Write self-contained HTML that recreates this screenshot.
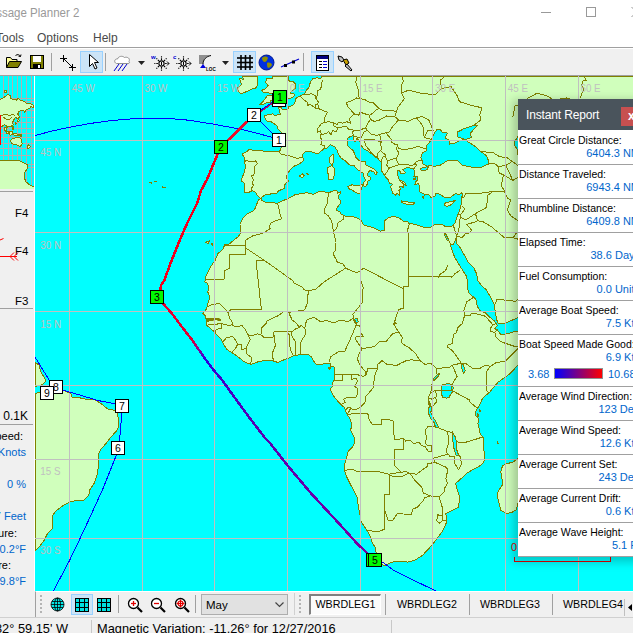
<!DOCTYPE html>
<html><head><meta charset="utf-8"><title>Passage Planner 2</title>
<style>
html,body{margin:0;padding:0;}
body{width:633px;height:633px;overflow:hidden;position:relative;background:#fff;font-family:"Liberation Sans",Arial,sans-serif;font-size:11px;color:#000;}
.abs{position:absolute;}
#title{left:-22px;top:5px;font-size:12px;color:#999;white-space:nowrap;line-height:16px;transform:scaleX(0.96);transform-origin:100% 0;}
#menu span{position:absolute;top:30px;font-size:12px;line-height:16px;color:#4a4a4a;white-space:nowrap;}
#tb{left:0;top:47px;width:633px;height:29px;background:#f0f0f0;border-top:1px solid #a0a0a0;box-sizing:border-box;border-bottom:1px solid #a0a0a0;}
#tb:before{content:"";position:absolute;left:0;top:0;width:100%;height:1px;background:#fff;}
.sel{position:absolute;background:#cce4f7;border:1px solid #99d1ff;box-sizing:border-box;}
.sep{position:absolute;width:1px;background:#a0a0a0;}
#left{left:0;top:76px;width:34px;height:515px;background:#f0f0f0;overflow:hidden;}
#left .t{position:absolute;white-space:nowrap;font-size:11px;line-height:13px;}
#left .b{color:#0066cc;}
.hl{position:absolute;left:0;width:33px;height:1px;background:#a0a0a0;}
#bot{left:0;top:591px;width:633px;height:26px;background:#f0f0f0;}
#status{left:0;top:617px;width:633px;height:16px;background:#f0f0f0;border-top:1px solid #d0d0d0;box-sizing:border-box;font-size:12.8px;white-space:nowrap;}
#ir{left:518px;top:99px;width:130px;height:458px;background:#fff;box-shadow:-3px 3px 9px 2px rgba(0,0,0,0.22);}
#irh{position:absolute;left:0;top:0;width:100%;height:31px;background:#4a545c;color:#fff;font-size:12px;letter-spacing:-0.15px;}
.row{position:absolute;left:0;width:130px;border-bottom:1px solid #a0a0a0;box-sizing:border-box;}
.row .l{position:absolute;left:1px;top:4px;white-space:nowrap;line-height:13px;transform:scaleX(0.955);transform-origin:0 0;}
.row .v{position:absolute;right:8px;top:17px;white-space:nowrap;color:#0066cc;line-height:13px;}
</style></head><body>
<div id="title" class="abs">Passage Planner 2</div>
<svg class="abs" style="left:530px;top:0" width="103" height="26"><g stroke="#999" stroke-width="1" fill="none"><line x1="11" y1="12.5" x2="21" y2="12.5"/><rect x="56.5" y="7.5" width="9" height="9"/><line x1="101.5" y1="7" x2="104" y2="9.5"/><line x1="101.5" y1="17" x2="104" y2="14.5"/></g></svg>
<div id="menu"><span style="left:-4px">Tools</span><span style="left:37px">Options</span><span style="left:93px">Help</span></div>
<div id="tb" class="abs">
<div class="sel" style="left:80px;top:3px;width:23px;height:22px"></div>
<div class="sel" style="left:233px;top:3px;width:23px;height:22px"></div>
<div class="sel" style="left:311px;top:3px;width:23px;height:22px"></div>
<div class="sep" style="left:51px;top:5px;height:18px"></div>
<div class="sep" style="left:105px;top:5px;height:18px"></div>
<div class="sep" style="left:303px;top:5px;height:18px"></div>
<svg class="abs" style="left:5px;top:6px" width="18" height="16" viewBox="0 0 18 16"><path d="M1.5 13.5V3.5h4l1.5 2h5v2" fill="#ffff99" stroke="#000"/><path d="M1.5 13.5l3-6h12l-3.5 6z" fill="#808000" stroke="#000"/><path d="M10.5 1.5c2-1.5 4-1 5 1m0 0l.5-2m-.5 2l-2-.3" fill="none" stroke="#000"/></svg>
<svg class="abs" style="left:29px;top:6px" width="16" height="16" viewBox="0 0 16 16"><rect x="1.5" y="1.5" width="13" height="13" fill="#808000" stroke="#000"/><rect x="4" y="2" width="8" height="6" fill="#fff"/><rect x="4" y="10" width="8" height="4.5" fill="#000"/><rect x="9" y="11" width="2" height="3" fill="#fff"/></svg>
<svg class="abs" style="left:59px;top:6px" width="18" height="18" viewBox="0 0 18 18"><g stroke="#000" fill="none"><line x1="4.5" y1="1" x2="4.5" y2="8"/><line x1="1" y1="4.5" x2="8" y2="4.5"/><line x1="4.5" y1="4.5" x2="13" y2="13" /><line x1="13.5" y1="10" x2="13.5" y2="17"/><line x1="10" y1="13.5" x2="17" y2="13.5"/></g></svg>
<svg class="abs" style="left:87px;top:5px" width="14" height="18" viewBox="0 0 14 18"><path d="M2.5 1.5v12l3-3 2.5 5.5 2-1-2.5-5.5h4z" fill="#fff" stroke="#000"/></svg>
<svg class="abs" style="left:113px;top:6px" width="20" height="18" viewBox="0 0 20 18"><path d="M3.5 9.5c-3-1-2-5 1-4.5c1-3 5-3.5 7-1.5c3-1 6 1 4.5 4c1 1 .5 2-1 2z" fill="#fff" stroke="#909090"/><g stroke="#0000d0"><line x1="6" y1="10" x2="1" y2="17"/><line x1="10" y1="10" x2="5" y2="17"/><line x1="14" y1="10" x2="9" y2="17"/></g></svg>
<svg class="abs" style="left:138px;top:12px" width="8" height="6" viewBox="0 0 8 6"><path d="M0 1h7l-3.5 4z" fill="#222"/></svg>
<svg class="abs" style="left:151px;top:5px" width="20" height="19" viewBox="0 0 20 19"><text x="0" y="6" font-size="6px" font-weight="bold" fill="#0000d0" font-family="Liberation Sans, sans-serif">w</text><g stroke="#000" fill="none" stroke-width="1.1"><circle cx="10.5" cy="10.5" r="2.6" fill="#fff"/><line x1="10.5" y1="9" x2="10.5" y2="12"/><g stroke-dasharray="1.6 0.9"><line x1="14.1" y1="10.5" x2="17.7" y2="10.5"/><line x1="13.0" y1="13.0" x2="15.6" y2="15.6"/><line x1="10.5" y1="14.1" x2="10.5" y2="17.7"/><line x1="8.0" y1="13.0" x2="5.4" y2="15.6"/><line x1="6.9" y1="10.5" x2="3.3" y2="10.5"/><line x1="8.0" y1="8.0" x2="5.4" y2="5.4"/><line x1="10.5" y1="6.9" x2="10.5" y2="3.3"/><line x1="13.0" y1="8.0" x2="15.6" y2="5.4"/></g><path d="M16 8.5l2 2-2 2" stroke-width="1"/></g></svg>
<svg class="abs" style="left:173px;top:5px" width="20" height="19" viewBox="0 0 20 19"><text x="0" y="6" font-size="6px" font-weight="bold" fill="#0000d0" font-family="Liberation Sans, sans-serif">c</text><g stroke="#000" fill="none" stroke-width="1.1"><circle cx="10.5" cy="10.5" r="2.6" fill="#fff"/><line x1="10.5" y1="9" x2="10.5" y2="12"/><g stroke-dasharray="1.6 0.9"><line x1="14.1" y1="10.5" x2="17.7" y2="10.5"/><line x1="13.0" y1="13.0" x2="15.6" y2="15.6"/><line x1="10.5" y1="14.1" x2="10.5" y2="17.7"/><line x1="8.0" y1="13.0" x2="5.4" y2="15.6"/><line x1="6.9" y1="10.5" x2="3.3" y2="10.5"/><line x1="8.0" y1="8.0" x2="5.4" y2="5.4"/><line x1="10.5" y1="6.9" x2="10.5" y2="3.3"/><line x1="13.0" y1="8.0" x2="15.6" y2="5.4"/></g><path d="M16 8.5l2 2-2 2" stroke-width="1"/></g></svg>
<svg class="abs" style="left:198px;top:6px" width="22" height="18" viewBox="0 0 22 18"><path d="M1 1h12c-5 1-8 4-8 9h-4z" fill="#909090"/><path d="M13 1.5c-5 1-8 4-8 9" fill="none" stroke="#000"/><path d="M2 14l3-4 3 4z" fill="#0000e0"/><text x="8" y="17" font-size="4.6px" font-weight="bold" font-family="Liberation Sans, sans-serif">LOC</text></svg>
<svg class="abs" style="left:222px;top:12px" width="8" height="6" viewBox="0 0 8 6"><path d="M0 1h7l-3.5 4z" fill="#222"/></svg>
<svg class="abs" style="left:237px;top:7px" width="16" height="16" viewBox="0 0 16 16"><g stroke="#000" stroke-width="1.600"><line x1="4" y1="0" x2="4" y2="15"/><line x1="8.5" y1="0" x2="8.5" y2="15"/><line x1="13" y1="0" x2="13" y2="15"/><line x1="0" y1="3" x2="16" y2="3"/><line x1="0" y1="7.5" x2="16" y2="7.5"/><line x1="0" y1="12" x2="16" y2="12"/></g></svg>
<svg class="abs" style="left:258px;top:6px" width="17" height="17" viewBox="0 0 17 17"><circle cx="8.5" cy="8.5" r="7.5" fill="#0030e0" stroke="#001890"/><path d="M4 4c2-2 5-2 6 0c-1 2-1 3-3 4c-2 0-3-2-3-4zM9 9c2-1 5 0 5 2c-1 2-3 3-4 3c-1-1-1-3-1-5z" fill="#909000"/></svg>
<svg class="abs" style="left:280px;top:8px" width="20" height="14" viewBox="0 0 20 14"><line x1="1" y1="11" x2="19" y2="3" stroke="#0000d0" stroke-width="1.200"/><rect x="4" y="8" width="3" height="3" fill="#000"/><rect x="12" y="4.5" width="3" height="3" fill="#000"/></svg>
<svg class="abs" style="left:316px;top:7px" width="14" height="17" viewBox="0 0 14 17"><rect x=".5" y=".5" width="12" height="15" fill="#fff" stroke="#000"/><rect x="1" y="1" width="11" height="3" fill="#000080"/><g stroke="#000"><line x1="3" y1="6.5" x2="6" y2="6.5"/><line x1="3" y1="9.5" x2="6" y2="9.5"/><line x1="3" y1="12.5" x2="6" y2="12.5"/></g><g stroke="#0000d0"><line x1="7" y1="6.5" x2="11" y2="6.5"/><line x1="7" y1="9.5" x2="11" y2="9.5"/><line x1="7" y1="12.5" x2="11" y2="12.5"/></g></svg>
<svg class="abs" style="left:336px;top:6px" width="18" height="18" viewBox="0 0 18 18"><g stroke="#000" stroke-width="1"><path d="M2 2l4 1 2 3-2 2-3-2z" fill="#c0c0c0"/><path d="M7 6l4-1 2 4-3 2z" fill="#c8a000"/><path d="M11 10l5 6-1 1-6-5z" fill="#c0c0c0"/></g></svg>
</div>
<svg id="map" width="598" height="515" viewBox="35 76 598 515" style="position:absolute;left:35px;top:76px;background:#00ffff" shape-rendering="crispEdges">
<g fill="#d0ffbc" stroke="#808000" stroke-width="1" stroke-linejoin="round">
<path d="M320.9 78.5 L316.6 77.7 L312.7 78.9 L310.5 81.8 L308.8 87.7 L306.9 89.7 L304.5 94.0 L299.6 96.3 L296.5 97.5 L295.3 100.2 L294.8 103.2 L292.3 105.5 L288.5 107.0 L288.0 108.9 L285.6 110.0 L282.2 109.6 L281.2 107.0 L278.3 107.0 L279.7 110.7 L280.2 114.8 L277.8 114.8 L274.4 115.5 L273.0 113.7 L270.1 114.4 L264.7 115.5 L265.2 119.2 L266.7 121.0 L271.0 121.7 L275.4 124.6 L277.3 126.0 L277.8 128.8 L281.7 133.0 L282.2 137.2 L281.7 143.4 L280.7 149.5 L278.8 151.8 L273.0 151.5 L269.1 151.1 L263.3 151.1 L259.4 150.1 L253.6 150.5 L249.2 149.1 L246.8 151.8 L242.9 153.5 L242.4 154.8 L244.4 157.4 L244.6 161.4 L245.4 167.2 L244.4 172.3 L242.0 178.0 L241.5 181.4 L242.9 182.0 L244.9 183.6 L244.9 186.7 L244.1 192.2 L249.2 192.2 L251.7 190.9 L254.1 191.2 L256.5 193.4 L257.5 195.8 L260.4 198.2 L261.8 197.3 L266.2 194.0 L270.5 194.0 L276.8 193.7 L278.3 190.9 L284.1 188.5 L284.1 186.0 L287.0 181.7 L288.5 181.4 L286.0 177.3 L287.5 173.6 L290.9 169.1 L293.3 166.5 L298.2 164.6 L303.0 161.4 L303.0 158.4 L302.3 154.8 L304.5 152.1 L307.8 151.1 L311.7 151.8 L313.7 152.5 L317.5 153.8 L320.0 152.1 L322.9 149.5 L327.2 147.8 L330.6 144.7 L335.0 147.1 L337.4 150.8 L338.4 154.5 L341.3 158.1 L344.7 160.4 L347.1 162.7 L350.5 165.6 L354.4 165.9 L356.3 168.5 L357.7 169.7 L360.2 171.3 L363.1 173.2 L364.0 176.7 L365.5 180.5 L364.0 182.3 L363.3 185.7 L365.5 186.4 L367.7 183.6 L367.9 181.1 L370.6 179.8 L370.3 177.3 L367.4 175.5 L367.9 172.9 L369.9 170.4 L374.2 172.0 L375.2 174.5 L376.6 174.8 L377.1 172.6 L374.7 169.4 L369.9 166.9 L365.0 164.3 L365.5 161.4 L361.1 161.4 L358.7 160.1 L355.8 157.1 L353.4 150.8 L350.0 148.1 L347.1 145.4 L347.1 140.7 L348.1 137.9 L351.0 136.2 L353.9 135.8 L353.4 140.0 L354.8 142.0 L356.8 138.6 L359.7 140.7 L361.1 145.4 L364.5 149.5 L367.4 150.8 L371.3 153.5 L375.2 156.8 L377.6 158.1 L380.5 161.4 L382.0 163.3 L381.5 167.2 L381.5 171.0 L383.9 174.2 L385.4 176.7 L388.3 179.8 L389.7 183.6 L392.6 184.2 L390.7 186.7 L392.1 190.9 L392.6 193.4 L396.0 195.2 L397.0 193.4 L399.4 195.2 L398.9 190.3 L400.9 189.1 L399.4 186.7 L402.3 186.7 L404.0 188.2 L403.8 184.8 L400.4 181.1 L398.4 178.0 L397.5 174.2 L397.0 171.0 L398.4 170.1 L400.4 172.0 L400.9 173.9 L403.3 173.6 L405.7 172.6 L402.8 169.7 L405.2 168.1 L408.6 167.8 L413.5 168.5 L414.4 171.7 L414.4 173.2 L413.9 176.7 L417.8 176.7 L417.3 180.5 L415.4 182.0 L414.9 184.5 L418.8 183.6 L419.3 186.7 L419.3 189.7 L420.2 192.2 L423.6 194.0 L426.0 194.0 L428.5 194.6 L430.9 197.3 L434.8 196.7 L436.2 193.1 L440.6 194.6 L444.9 197.6 L450.3 197.3 L455.1 193.7 L459.5 194.6 L461.9 192.8 L462.9 194.6 L461.2 198.2 L461.4 203.0 L460.7 206.5 L459.5 210.6 L457.5 215.3 L456.6 218.7 L455.1 222.7 L453.2 225.6 L450.3 226.7 L445.9 227.0 L444.0 225.6 L441.6 224.4 L437.7 224.2 L434.3 225.0 L431.9 226.7 L428.0 228.1 L423.1 227.0 L418.3 225.3 L412.5 223.9 L409.1 223.6 L407.6 221.6 L403.3 221.3 L399.4 218.1 L394.1 216.4 L389.2 217.3 L384.9 220.4 L384.1 227.3 L384.4 230.1 L380.5 231.2 L375.7 228.7 L369.9 226.7 L363.6 225.0 L361.1 219.9 L356.3 217.6 L351.4 216.4 L347.1 217.0 L343.2 215.0 L341.3 214.7 L340.3 212.1 L336.4 210.0 L336.7 208.3 L340.3 203.5 L340.8 200.6 L338.9 199.1 L338.4 195.8 L341.0 193.1 L340.8 191.9 L337.4 193.4 L336.9 190.9 L335.0 190.3 L329.2 192.5 L323.8 191.9 L318.5 191.9 L313.2 194.3 L306.9 192.8 L302.0 193.4 L294.8 194.9 L288.0 198.8 L282.7 200.6 L277.3 203.5 L273.0 202.4 L266.7 203.0 L261.8 200.6 L261.3 198.8 L258.7 199.4 L256.5 204.7 L254.6 209.7 L250.7 212.4 L246.3 214.4 L242.4 218.7 L240.0 224.4 L240.5 229.5 L240.8 232.9 L238.1 236.8 L233.7 240.1 L229.4 244.0 L225.0 244.5 L222.6 249.5 L217.7 253.8 L215.3 260.2 L211.0 266.1 L208.5 270.9 L205.6 277.2 L204.9 281.8 L207.6 283.4 L209.0 289.1 L207.6 291.6 L210.0 296.8 L207.6 304.4 L206.6 308.9 L202.7 313.4 L205.6 315.9 L206.1 319.9 L206.1 324.9 L210.0 327.9 L214.8 332.3 L216.8 334.8 L221.1 339.2 L223.6 344.1 L226.9 349.5 L231.8 352.5 L235.2 354.9 L241.5 359.3 L243.9 361.7 L250.7 364.4 L258.4 361.7 L265.7 360.3 L272.0 360.7 L277.8 362.4 L282.7 360.3 L289.9 357.6 L293.3 355.9 L299.6 354.6 L304.0 354.4 L308.8 354.9 L311.7 357.3 L313.7 361.2 L316.6 364.6 L321.4 364.1 L327.7 363.7 L330.1 363.4 L330.6 366.1 L334.0 366.6 L334.5 370.9 L335.0 374.3 L334.0 380.2 L332.6 383.1 L332.6 386.5 L330.1 388.9 L332.6 394.7 L335.9 399.1 L340.8 404.4 L344.7 407.8 L346.6 413.7 L347.6 415.1 L350.5 419.5 L351.9 426.4 L350.5 429.8 L354.4 438.2 L354.4 443.1 L352.4 447.1 L348.1 451.6 L346.6 458.1 L344.7 464.1 L344.4 470.4 L346.6 476.8 L351.9 487.1 L357.3 497.5 L357.7 502.8 L359.7 513.4 L361.1 521.5 L366.9 530.3 L369.9 535.3 L372.3 542.6 L375.7 548.3 L376.2 553.4 L374.2 555.2 L376.9 560.4 L377.1 563.0 L381.0 563.9 L384.4 565.7 L389.2 563.3 L394.1 561.6 L401.3 561.0 L407.6 562.1 L411.5 561.3 L415.9 559.5 L422.7 555.2 L428.0 549.4 L432.8 544.3 L437.7 537.5 L442.5 531.4 L446.9 521.5 L446.4 516.1 L445.4 514.0 L449.8 511.8 L458.5 507.0 L459.5 500.1 L459.0 495.4 L457.1 489.2 L455.6 483.5 L460.9 478.8 L466.3 473.7 L471.6 470.2 L478.9 466.6 L483.7 462.6 L484.7 456.6 L483.7 448.6 L483.7 438.2 L480.3 434.2 L479.3 428.8 L477.9 423.4 L478.9 419.0 L475.9 416.1 L475.5 412.2 L477.4 408.3 L479.8 404.9 L482.2 399.1 L486.1 394.7 L489.0 393.3 L493.4 387.4 L498.2 382.1 L504.5 377.7 L510.3 373.4 L516.6 366.6 L520.0 363.7 L524.9 356.4 L528.8 347.6 L533.6 339.7 L534.6 334.8 L536.0 327.9 L532.1 328.4 L524.9 330.6 L515.2 331.3 L505.5 334.3 L500.7 334.5 L497.3 329.9 L494.8 328.9 L497.3 325.4 L494.4 320.9 L489.5 316.9 L485.2 312.9 L479.8 310.4 L477.4 306.4 L475.9 299.3 L468.7 292.7 L467.7 288.6 L467.7 281.3 L466.3 276.1 L460.0 266.1 L454.6 257.0 L451.7 249.5 L450.0 244.0 L453.2 245.1 L454.6 241.8 L456.8 235.7 L456.1 243.4 L459.5 246.7 L464.3 254.9 L468.2 262.4 L474.0 268.2 L476.9 274.5 L477.4 279.8 L481.3 285.5 L486.1 289.6 L491.0 297.8 L494.4 304.9 L495.3 311.9 L496.8 319.9 L498.2 323.7 L503.1 323.2 L505.5 322.9 L512.8 319.9 L520.0 316.9 L527.3 312.9 L539.4 308.4 L578.2 301.8 L638.0 289.2 L638.0 76.5 L322.0 76.5 L320.9 78.5Z"/>
<path d="M40.4 385.5 L43.3 384.0 L45.8 380.7 L43.8 376.8 L40.4 370.9 L39.0 365.1 L36.6 363.2 L35.5 362.4 L35.5 386.3 L40.4 385.5Z"/>
<path d="M39.5 546.6 L43.8 540.9 L47.2 534.2 L52.1 528.7 L52.1 516.1 L55.5 511.3 L63.2 505.4 L71.0 501.7 L76.8 500.4 L84.0 500.1 L88.9 494.9 L89.8 489.7 L94.7 482.4 L97.6 473.2 L98.6 464.1 L98.6 454.1 L101.0 449.1 L106.3 443.1 L111.2 436.7 L117.9 429.3 L118.7 420.0 L116.5 410.7 L107.3 408.8 L101.0 403.5 L93.7 399.3 L85.0 399.1 L76.8 397.1 L72.4 397.6 L71.0 394.2 L64.7 390.8 L57.4 388.4 L53.5 389.9 L51.6 386.5 L47.7 386.5 L43.8 389.9 L40.4 392.8 L35.5 393.1 L35.5 550.3 L39.5 546.6Z"/>
<path d="M243.9 79.7 L239.5 78.1 L241.5 84.6 L237.1 88.5 L239.1 92.5 L241.5 93.6 L246.3 91.7 L251.2 89.3 L256.5 87.7 L257.9 82.2 L257.9 76.5 L242.0 76.5 L243.9 79.7Z"/>
<path d="M262.8 104.7 L267.2 102.1 L270.1 102.8 L271.0 100.2 L275.4 100.2 L278.3 100.2 L281.7 98.6 L288.5 99.0 L292.3 97.5 L294.3 96.0 L294.3 94.0 L290.4 93.2 L291.9 90.9 L295.3 88.5 L296.0 84.6 L293.3 81.8 L289.4 81.8 L288.5 78.9 L288.6 76.5 L272.7 76.5 L272.5 78.9 L266.7 78.1 L265.7 82.6 L268.1 85.4 L265.2 88.9 L261.8 90.1 L263.3 92.1 L268.1 92.5 L272.0 94.0 L274.4 92.8 L272.5 95.6 L267.2 95.6 L265.2 98.6 L262.8 101.7 L259.9 104.4 L262.8 104.7Z"/>
<path d="M348.5 188.5 L352.9 190.6 L357.3 193.4 L360.7 194.0 L361.1 189.1 L363.1 184.5 L357.7 185.7 L351.9 184.8 L347.8 186.7 L348.5 188.5Z"/>
<path d="M327.2 170.4 L328.2 174.2 L328.2 179.8 L331.1 179.8 L333.5 178.6 L334.5 174.2 L334.5 168.5 L332.1 165.6 L327.2 167.8 L327.2 170.4Z"/>
<path d="M329.6 162.7 L332.1 164.6 L333.0 163.3 L333.5 158.1 L333.0 154.1 L329.2 158.1 L329.6 162.7Z"/>
<path d="M401.8 202.7 L407.6 204.4 L413.5 204.1 L414.9 202.7 L409.6 202.1 L404.7 201.8 L401.6 200.9 L401.8 202.7Z"/>
<path d="M444.5 205.6 L447.4 206.5 L452.2 204.1 L455.1 200.3 L451.7 201.8 L447.4 202.1 L444.0 203.8 L444.5 205.6Z"/>
<path d="M300.6 176.7 L302.3 178.0 L304.2 175.5 L302.5 173.9 L299.1 176.4 L300.6 176.7Z"/>
<path d="M307.4 174.5 L308.3 174.2 L306.2 173.2 L307.4 174.5Z"/>
<path d="M400.9 181.7 L403.8 183.9 L406.4 186.0 L404.3 182.0 L399.9 180.2 L400.9 181.7Z"/>
<path d="M423.6 198.2 L424.1 195.8 L422.2 197.0 L423.6 198.2Z"/>
<path d="M413.5 179.8 L415.9 179.8 L415.9 177.7 L413.0 178.6 L413.5 179.8Z"/>
<path d="M520.0 451.6 L519.5 457.6 L512.8 462.1 L505.5 464.1 L502.6 465.6 L500.7 471.7 L502.1 479.4 L502.6 484.5 L498.2 491.2 L497.3 496.5 L499.2 503.3 L500.7 510.2 L506.5 513.7 L513.2 511.8 L516.2 509.7 L519.5 497.5 L524.4 479.4 L527.3 470.2 L529.2 461.6 L531.7 459.1 L529.7 451.6 L526.3 444.1 L520.0 451.6Z"/>
<path d="M208.1 244.0 L209.5 241.0 L205.6 242.1 L208.1 244.0Z"/>
<path d="M212.4 245.4 L212.9 243.4 L211.0 243.4 L212.4 245.4Z"/>
<path d="M164.0 187.9 L165.4 187.3 L162.5 187.0 L164.0 187.9Z"/>
<path d="M151.9 183.3 L151.4 182.0 L149.4 182.6 L151.9 183.3Z"/>
<path d="M155.7 182.0 L156.5 181.7 L154.8 181.4 L155.7 182.0Z"/>
<path d="M329.4 369.7 L330.6 368.0 L328.7 367.5 L329.4 369.7Z"/>
<path d="M477.9 416.6 L478.9 415.1 L477.4 413.7 L477.9 416.6Z"/>
<path d="M479.8 411.7 L480.5 410.7 L479.8 409.3 L479.8 411.7Z"/>
<path d="M497.3 443.6 L498.2 443.6 L497.0 441.1 L497.3 443.6Z"/>
<path d="M547.6 325.2 L551.5 324.2 L546.2 323.7 L547.6 325.2Z"/>
</g>
<g fill="#00ffff" stroke="#808000" stroke-width="1" stroke-linejoin="round">
<polygon points="428.0,166.5 423.1,164.0 420.7,157.4 422.7,152.8 426.0,150.8 426.0,146.1 430.9,140.7 433.8,134.4 436.7,129.5 440.1,129.5 442.5,132.3 447.4,133.0 444.9,137.9 449.8,140.7 449.3,144.1 454.6,143.4 459.0,140.7 464.3,139.3 457.1,136.5 457.1,132.3 464.3,128.5 471.6,126.0 477.9,125.3 473.0,130.2 470.1,133.7 471.6,137.2 466.7,139.3 465.3,140.0 469.2,142.7 474.0,145.4 479.8,150.8 486.1,155.5 489.0,161.4 488.5,164.0 481.3,167.2 474.0,167.5 466.7,166.2 461.9,164.9 458.0,160.7 452.2,161.0 447.4,160.7 440.1,165.3 434.3,166.2 429.0,165.6"/>
<polygon points="444.2,233.3 445.6,233.6 448.9,240.2 447.6,241 444.9,236"/>
<polygon points="420,169.5 423,167.2 428.4,166.8 427,169.5 423,171"/>
<polygon points="518.1,136.5 515.2,140.7 514.0,143.4 515.2,146.1 517.1,149.5 517.6,154.1 521.5,160.7 524.9,165.3 527.3,169.7 531.2,171.7 527.3,173.6 526.3,178.0 524.4,183.6 524.9,188.5 530.7,190.3 537.0,193.4 548.1,192.8 549.1,179.8 544.3,167.2 541.8,160.7 534.6,144.1 544.3,130.2 534.6,126.7 524.9,130.2"/>
<polygon points="441.1,389.9 442.5,384.5 448.8,383.6 452.7,385.0 453.2,387.9 452.2,392.3 449.8,395.7 449.8,397.6 446.4,398.1 442.5,397.1 441.6,394.2"/>
<polygon points="429.4,401.8 431.4,407.3 430.9,412.7 432.8,417.1 436.2,422.0 438.6,427.8 435.7,427.4 433.8,422.0 430.4,418.1 428.5,413.2 429.0,407.3"/>
<polygon points="452.2,431.8 455.1,436.7 456.6,442.1 456.6,449.1 458.5,455.6 456.1,455.1 454.1,449.1 453.2,443.1 452.2,438.2"/>
<polygon points="461.4,363.2 463.4,364.6 465.3,370.9 463.4,373.4 461.9,368.5"/>
<polygon points="434.3,380.4 439.9,374.3 438.6,373.4 432.8,379.2"/>
<polygon points="353.4,319.4 357.3,318.4 358.2,321.9 355.3,323.4"/>
</g>
<g fill="none" stroke="#808000" stroke-width="1" stroke-linejoin="round">
<polyline points="276.8,203.5 278.8,206.5 279.3,212.4 281.7,218.7 275.4,221.0 271.0,222.7 269.6,226.1 270.1,229.0 263.3,232.9 258.4,234.6 253.1,235.7 245.5,240.1 245.5,247.8"/>
<polyline points="223.6,245.8 245.5,245.8"/>
<polyline points="245.5,247.8 245.5,254.9 229.4,254.9 229.4,268.5 224.5,270.9 224.0,279.6 205.1,279.6"/>
<polyline points="245.5,247.8 264.1,260.2 293.1,280.8 293.3,282.6 303.0,287.5 303.2,289.6 308.1,290.9"/>
<polyline points="264.1,260.2 256.0,260.2 260.9,305.9 261.6,309.4 242.0,309.7 235.7,309.9 230.3,309.9 228.4,312.9"/>
<polyline points="228.4,312.9 225.0,308.9 219.7,303.9 212.4,304.1 208.5,306.4 207.6,306.4"/>
<polyline points="228.4,312.9 229.4,317.9 232.3,322.2 232.3,324.9"/>
<polyline points="206.1,318.9 212.4,318.9 214.3,317.9 220.6,319.4 220.6,320.4 214.8,319.4 212.9,320.2 206.6,321.4"/>
<polyline points="206.6,325.2 211.4,324.7 221.1,323.6 224.5,324.4 227.9,325.2 232.3,324.9"/>
<polyline points="221.1,323.6 221.1,328.4 216.3,329.4 214.8,332.1"/>
<polyline points="232.3,324.9 235.7,326.9 242.0,325.6 244.9,328.9 246.3,331.8 248.7,335.8"/>
<polyline points="223.1,341.4 226.9,337.3 232.8,336.8 235.7,340.2 237.6,344.1"/>
<polyline points="237.6,344.1 236.1,347.6 231.8,352.0"/>
<polyline points="237.6,344.1 241.5,344.6 242.0,349.5 246.3,348.5"/>
<polyline points="248.7,335.8 250.2,339.7 247.8,344.1 246.3,348.5"/>
<polyline points="246.3,348.5 246.8,353.9 251.2,357.3 250.9,364.4"/>
<polyline points="248.7,335.8 254.1,335.0 257.5,333.8 260.9,334.8"/>
<polyline points="260.9,334.8 261.8,327.9 266.2,323.4 267.2,320.9 272.0,318.4 277.8,315.9 284.1,311.4 288.5,312.2"/>
<polyline points="288.5,312.2 292.3,311.9 304.5,309.9 307.8,302.3 308.1,290.9"/>
<polyline points="288.5,312.2 292.1,319.9 296.7,323.4 299.1,327.4"/>
<polyline points="260.9,334.8 264.7,338.0 273.0,337.3 273.9,335.3 273.7,331.8"/>
<polyline points="273.7,331.8 287.0,331.3"/>
<polyline points="273.7,331.8 274.4,339.2 275.4,345.6 272.0,353.9 273.5,360.7"/>
<polyline points="287.0,331.3 289.4,335.3 289.4,342.7 290.4,349.5 293.3,355.9"/>
<polyline points="291.9,331.8 291.4,335.3 295.3,341.7 295.3,355.4"/>
<polyline points="287.0,331.3 291.9,331.8 294.3,329.6 299.1,327.4"/>
<polyline points="299.1,327.4 301.3,325.4 304.9,328.4 305.9,333.8 301.1,341.2 300.6,347.1 300.6,354.4"/>
<polyline points="304.9,328.4 305.2,324.4 307.4,319.4 314.1,317.4 320.9,321.9 326.3,320.4 334.0,322.9 339.3,320.2 348.1,321.4 353.4,318.4"/>
<polyline points="308.1,290.9 315.6,289.3 323.8,282.1 345.6,268.2"/>
<polyline points="345.6,268.2 343.2,264.0 337.4,262.4 335.7,258.6 333.0,253.8 335.5,250.0 335.0,242.3 335.2,238.5 333.5,231.5"/>
<polyline points="329.2,192.5 327.7,198.2 327.7,203.0 324.8,208.3 324.3,212.9 328.2,215.8 331.6,221.0 333.5,231.5"/>
<polyline points="333.5,231.5 336.9,228.4 337.4,223.3 343.2,219.3 343.2,215.0"/>
<polyline points="345.6,268.2 356.3,272.7 360.2,270.9 363.6,268.2 403.8,289.1"/>
<polyline points="409.3,223.6 407.6,230.1 408.6,237.4 408.6,286.5 403.8,286.5 403.8,308.4 398.4,309.4 396.5,315.9 394.6,321.9 396.5,323.9 393.6,323.9 398.4,331.8"/>
<polyline points="360.2,270.9 360.7,279.8 363.1,287.0 362.6,302.3 352.9,314.4 353.4,318.4"/>
<polyline points="353.4,318.4 355.8,321.4 356.3,324.9 358.2,325.9 359.7,325.6 360.7,329.4 360.7,332.8 363.6,336.8 356.3,336.8 355.1,338.7 362.1,349.0"/>
<polyline points="356.3,324.9 353.4,331.8 350.0,339.7 344.7,351.5 338.9,351.5 335.0,353.9 330.6,356.8 329.2,362.2"/>
<polyline points="362.1,349.0 367.4,347.6 374.7,346.6 379.5,341.7 386.3,341.2 392.6,333.8 398.4,331.8"/>
<polyline points="398.4,331.8 402.3,337.3 401.3,342.7 404.7,345.1 409.1,347.6 415.4,353.4 420.2,360.7"/>
<polyline points="362.1,349.0 358.2,355.4 357.7,359.8 360.2,365.6 365.0,370.9 366.0,374.8"/>
<polyline points="366.0,374.8 367.9,368.5 377.6,368.5"/>
<polyline points="377.6,368.5 377.6,364.6 382.0,360.7 386.8,364.1 396.5,365.6 400.9,363.2 406.2,360.7 411.0,359.8 420.2,360.7"/>
<polyline points="335.0,374.3 342.2,374.8 351.9,374.8 357.7,374.8 363.6,376.3 366.0,374.8"/>
<polyline points="334.0,380.7 342.2,380.7 342.2,374.8"/>
<polyline points="341.3,404.4 345.1,402.5 343.7,399.1 348.1,397.1 350.5,397.1 355.8,397.1 357.3,394.7 357.7,388.4 354.8,386.5 357.7,381.1 356.3,378.7 351.4,379.2 351.9,374.8"/>
<polyline points="377.6,368.5 375.2,373.9 373.7,383.1 373.2,387.9 366.0,396.2 365.0,402.5 361.1,406.4 357.3,409.0 352.4,409.3 351.0,407.8 348.5,407.1 345.6,409.8"/>
<polyline points="351.0,407.8 348.1,413.2 346.6,413.4"/>
<polyline points="347.1,414.9 351.4,413.9 367.9,414.0 369.4,420.5 372.8,424.9 381.5,424.4 382.0,419.5 385.8,419.5 387.3,419.0 393.1,421.0 393.4,432.3 395.0,439.7 397.0,439.2 403.8,438.7"/>
<polyline points="403.8,438.7 403.8,449.1 394.1,449.1 394.1,465.1 400.9,472.2"/>
<polyline points="344.4,470.4 352.9,469.2 356.3,471.2 376.6,471.2 389.2,474.2 400.9,472.2 406.2,471.7 409.9,473.2"/>
<polyline points="409.9,473.2 406.2,474.2 401.3,476.8 389.2,475.8 389.2,494.9 384.4,494.9 384.4,529.2"/>
<polyline points="367.2,530.3 371.8,530.9 375.7,532.0 380.5,530.9 384.4,529.2"/>
<polyline points="384.4,509.7 388.3,520.5 392.6,520.7 397.5,513.4 403.3,514.0 411.0,514.5 413.0,509.2 417.6,507.0 422.7,501.2 424.6,498.0 429.9,495.9"/>
<polyline points="429.9,495.9 423.1,492.8 421.7,487.1 414.4,479.9 409.9,473.2"/>
<polyline points="429.9,495.9 439.1,497.0"/>
<polyline points="439.1,497.0 444.5,491.2 444.9,487.6 447.4,483.5 445.9,478.8 447.4,471.7 446.9,467.6 439.1,464.1 434.8,462.3"/>
<polyline points="409.9,473.2 416.8,474.2 421.2,470.7 427.0,466.6 427.5,463.9 434.8,462.3"/>
<polyline points="434.8,462.3 433.8,458.1 448.3,454.1"/>
<polyline points="448.3,454.1 445.9,452.1 447.4,447.1 448.8,442.1 448.8,438.2 447.4,432.3 446.9,431.3"/>
<polyline points="446.9,431.3 442.0,429.3 437.7,427.4"/>
<polyline points="446.9,431.3 451.7,432.3"/>
<polyline points="436.2,425.9 427.5,426.9 425.1,430.8 426.5,437.7 425.1,443.1 428.0,446.1 431.9,445.1 431.9,451.3 428.0,451.1 425.1,446.6 421.2,445.6 419.3,442.1 413.5,443.6 410.1,440.2 405.7,441.1 403.8,438.7"/>
<polyline points="448.3,454.1 450.3,456.8 454.6,456.6 454.1,459.1 455.1,464.1 458.5,469.7 461.4,464.1 460.4,457.1 456.6,451.6"/>
<polyline points="456.8,441.9 464.3,442.6 471.6,440.6 483.5,436.7"/>
<polyline points="451.7,390.3 469.6,400.1 470.1,402.5 477.4,408.1"/>
<polyline points="451.7,390.3 452.2,384.5 454.6,380.2 457.1,376.3 454.6,370.5 452.2,365.1"/>
<polyline points="435.3,390.6 451.7,390.3"/>
<polyline points="430.9,392.3 431.4,385.7 432.6,381.6 439.1,375.1 436.7,373.9 436.7,368.5"/>
<polyline points="436.7,368.5 442.5,368.0 449.8,367.3 452.2,365.1"/>
<polyline points="428.0,398.6 430.9,392.3 435.3,390.6 436.9,396.7 435.3,397.1 432.3,399.1 428.0,398.6"/>
<polyline points="428.0,398.6 429.4,407.1 432.8,406.4 436.7,401.5 435.3,397.1"/>
<polyline points="452.2,365.1 461.4,363.2 461.9,363.9 466.3,363.9 472.1,368.0 478.9,369.0 485.2,365.1 490.5,366.3"/>
<polyline points="490.5,366.3 486.1,371.9 486.1,385.5 486.1,389.4 488.8,393.5"/>
<polyline points="490.5,366.3 495.8,362.7 505.5,361.2 520.0,346.6 515.2,346.6 500.7,341.7 495.8,336.8 494.8,332.1"/>
<polyline points="494.8,332.1 490.0,331.8 490.0,328.9 492.9,324.7"/>
<polyline points="494.8,332.1 497.0,329.6"/>
<polyline points="492.9,324.7 496.3,323.4"/>
<polyline points="492.9,324.7 485.2,316.2 476.4,313.9 471.6,313.4 469.6,315.9 464.6,315.4"/>
<polyline points="464.6,315.4 463.8,310.9 466.7,301.8 474.5,296.8"/>
<polyline points="464.6,315.4 462.4,323.4 457.5,327.9 456.6,332.8 453.7,334.3 452.7,339.2 452.7,343.6 448.3,344.6 447.4,347.1 452.2,350.5 457.1,356.8 458.5,359.3 461.4,363.2"/>
<polyline points="420.2,360.7 425.1,364.6 430.4,363.2 436.7,368.5"/>
<polyline points="439.1,497.0 442.5,508.1 442.3,515.9 443.0,520.5 446.9,520.7"/>
<polyline points="442.3,515.9 437.7,514.8 436.7,520.5 439.1,523.2 443.0,520.5"/>
<polyline points="244.6,161.4 247.8,160.1 248.3,162.0 255.5,161.0 257.5,163.3 254.1,167.2 254.6,171.7 253.6,175.5 251.2,175.8 253.6,179.8 252.1,183.6 253.6,184.8 251.2,189.1 251.7,190.9"/>
<polyline points="278.8,151.8 280.7,153.8 284.1,154.8 290.9,156.1 294.8,157.8 297.2,158.1 302.8,157.8"/>
<polyline points="323.8,148.8 324.8,146.1 320.9,144.7 321.4,140.7 320.4,135.1 321.4,134.4"/>
<polyline points="321.4,134.4 320.4,130.9 317.1,132.3 317.1,129.5 321.4,123.8 324.3,122.4"/>
<polyline points="324.3,122.4 324.3,118.8 327.2,112.2 323.3,110.7 318.5,108.5"/>
<polyline points="318.5,108.5 315.6,108.1 310.8,104.7 307.8,105.1 307.4,102.5 303.0,99.0 299.9,96.3"/>
<polyline points="304.0,94.0 308.3,94.4 311.7,93.6 315.6,96.0 315.1,98.6 316.6,99.0"/>
<polyline points="316.6,99.0 318.5,102.5 317.1,104.0 319.0,106.2 318.5,108.5"/>
<polyline points="315.6,108.1 315.4,104.0 317.1,104.0"/>
<polyline points="316.6,99.0 317.1,95.6 317.5,90.5 320.4,89.7 321.4,86.2 321.7,84.2 322.4,79.7"/>
<polyline points="324.3,122.4 329.2,121.7 333.5,122.8"/>
<polyline points="333.5,122.8 336.9,124.6 338.4,122.8 343.2,123.1 346.6,121.7 350.5,123.1 349.5,118.8 352.9,115.1 354.4,114.0"/>
<polyline points="321.4,134.4 325.8,133.7 328.7,131.6 331.1,134.8 332.6,130.6 336.4,131.6 338.1,127.8"/>
<polyline points="333.5,122.8 334.0,126.3 338.1,127.8"/>
<polyline points="338.1,127.8 341.8,127.0 346.6,126.3 347.6,128.8 353.9,130.2"/>
<polyline points="353.9,130.2 352.4,132.3 353.4,135.1 354.4,136.5"/>
<polyline points="353.9,130.2 358.2,130.9 363.1,128.8 365.5,127.8"/>
<polyline points="365.5,127.8 367.4,123.8 370.3,119.5"/>
<polyline points="354.4,114.0 358.7,115.1 360.2,112.2 365.5,114.0 369.6,115.1 370.3,119.5"/>
<polyline points="354.4,114.0 348.1,107.0 346.1,102.5 350.5,101.3 356.8,97.9 359.2,98.3"/>
<polyline points="359.2,98.3 358.2,89.3 355.8,82.6 356.8,76.5 356.3,73.2"/>
<polyline points="359.2,98.3 365.0,99.8 369.4,102.1 373.2,102.5 378.8,108.5"/>
<polyline points="369.6,115.1 372.8,113.3 375.7,110.0 378.8,108.5"/>
<polyline points="378.8,108.5 383.4,110.7 388.7,110.0 396.7,111.5"/>
<polyline points="370.3,119.5 374.2,121.3 378.6,120.6 382.9,118.1 386.8,115.9 392.6,117.0 394.8,116.6"/>
<polyline points="396.7,111.5 394.8,116.6 398.4,119.9"/>
<polyline points="396.7,111.5 397.5,107.7 402.3,101.7 404.3,98.6 401.8,93.2 401.8,84.6 403.3,81.4 401.3,74.0"/>
<polyline points="398.4,119.9 392.1,127.4 389.2,132.0 385.8,132.7"/>
<polyline points="385.8,132.7 379.5,134.4 376.6,135.5 371.3,134.1 367.4,130.2 365.5,127.8"/>
<polyline points="354.4,136.5 357.7,137.2 361.6,137.2 363.6,132.3 367.4,130.2"/>
<polyline points="364.0,139.3 369.4,139.3 374.7,140.0 379.5,141.3 381.5,141.3 379.5,134.4"/>
<polyline points="364.0,139.3 366.0,146.1 372.8,154.1 377.1,157.4"/>
<polyline points="385.8,132.7 391.2,139.3 391.2,142.0 394.6,144.1 397.5,144.1 397.5,146.1"/>
<polyline points="397.5,146.1 398.9,148.8 406.2,149.5 413.5,147.8 418.3,146.4 426.0,149.1"/>
<polyline points="398.4,119.9 408.1,121.3 416.4,117.7"/>
<polyline points="416.4,117.7 422.2,116.6 429.0,120.2 433.3,130.9 427.7,130.6 424.1,137.6"/>
<polyline points="416.4,117.7 420.7,123.1 423.6,128.1 424.1,137.6 430.9,139.3"/>
<polyline points="397.5,146.1 396.0,148.8 398.9,152.8 396.0,158.8 398.7,164.9"/>
<polyline points="398.7,164.9 406.2,164.0 410.1,165.6 413.9,164.9 415.1,162.7"/>
<polyline points="415.1,162.7 419.3,160.1 423.1,160.7"/>
<polyline points="415.1,162.7 416.4,165.3 413.7,168.8"/>
<polyline points="384.4,175.5 386.3,172.9 389.2,168.1 393.6,166.5 398.7,164.9"/>
<polyline points="381.5,161.7 382.5,157.1 384.9,156.8 386.8,159.4 387.3,161.4 386.8,165.3 389.2,168.1"/>
<polyline points="387.3,161.4 391.7,159.1 396.0,158.8"/>
<polyline points="377.1,157.4 377.1,154.1 380.5,150.8 382.0,147.5 380.0,144.7 381.5,141.3"/>
<polyline points="380.5,150.8 385.8,155.1 384.9,156.8"/>
<polyline points="401.8,93.2 408.6,90.1 420.7,93.2 435.3,94.8 441.6,88.5 451.2,86.6 457.1,95.6 459.5,101.7 471.6,105.5 481.8,107.7 479.8,115.1 480.8,120.2 472.6,126.0"/>
<polyline points="441.6,88.5 440.1,80.5 444.9,76.5 444.9,73.2"/>
<polyline points="512.8,116.6 515.2,105.5 522.5,104.7 527.3,98.6 537.0,93.2 546.7,95.6 553.9,100.2 566.1,97.9 575.7,100.6 585.4,99.4"/>
<polyline points="461.4,198.5 464.8,196.7 465.3,193.4 471.6,193.1 481.3,193.1 492.7,191.5 504.5,191.2"/>
<polyline points="504.5,191.2 501.6,186.0 502.6,177.3 504.5,175.5"/>
<polyline points="488.8,164.0 494.8,163.6 498.2,166.5 499.2,172.9 504.5,175.5"/>
<polyline points="481.3,151.5 493.4,152.8 499.7,156.8 506.5,157.4 512.3,161.4"/>
<polyline points="498.2,166.5 505.5,165.6 512.3,161.4 517.6,165.3 522.9,161.7"/>
<polyline points="505.5,165.6 507.9,169.7 510.3,174.8 512.8,180.5"/>
<polyline points="504.5,175.5 512.8,180.5 520.0,176.1 522.0,180.5 524.4,183.3"/>
<polyline points="492.7,191.5 487.1,195.8 487.6,200.6 486.1,207.7 475.5,213.5"/>
<polyline points="475.5,213.5 465.8,219.9 460.9,217.6"/>
<polyline points="461.9,206.2 464.8,208.9 461.9,212.9 460.9,214.1 457.5,215.3"/>
<polyline points="460.9,214.1 460.9,217.6 459.7,219.3 459.5,224.4 459.0,227.8 457.1,235.4"/>
<polyline points="453.4,225.6 456.6,235.7"/>
<polyline points="457.1,236.5 462.4,237.4 465.5,233.7 469.2,232.9 471.6,230.1 466.7,224.4 476.4,221.6 477.4,220.7"/>
<polyline points="477.4,220.7 475.5,213.5"/>
<polyline points="477.4,220.7 483.2,221.9 491.4,226.7 504.0,237.4 512.3,237.9 513.0,237.9"/>
<polyline points="513.0,237.9 517.4,238.5 518.6,241.2 522.0,241.0"/>
<polyline points="513.0,237.9 516.6,232.6 519.8,232.9"/>
<polyline points="504.5,191.2 507.4,198.2 510.8,200.0 507.4,210.0 510.8,215.8 518.6,221.0 518.6,227.3 520.0,230.4 522.7,233.2"/>
<polyline points="494.8,304.9 496.8,299.8 501.6,299.8 512.3,300.8 515.2,301.8 521.0,295.7 539.4,291.6"/>
<polyline points="584.5,77.0 586.5,80.5 583.0,81.0 581.5,85.0 584.0,89.0 582.0,93.0 580.5,98.0"/>
<polyline points="409.3,276.4 449.3,276.4 451.8,277.1 455.0,273.7 458.1,271.6 460.2,270.4"/>
<polyline points="438.5,278.1 439.2,275.0 443.0,272.4 445.5,270.6 447.0,267.4 447.8,264.9"/>
<polyline points="448.8,240.6 450.8,244.4"/>
</g>
<polygon fill="#808000" stroke="#808000" stroke-width="0.6" points="206.1,318.9 212.4,318.7 214.3,317.9 220.6,319.2 220.6,320.4 214.8,319.7 212.9,320.4 206.6,321.4"/>
<g stroke="#c0c0c0" stroke-width="1" fill="none">
<line x1="69.5" y1="76" x2="69.5" y2="591"/>
<line x1="142.5" y1="76" x2="142.5" y2="591"/>
<line x1="214.5" y1="76" x2="214.5" y2="591"/>
<line x1="287.5" y1="76" x2="287.5" y2="591"/>
<line x1="360.5" y1="76" x2="360.5" y2="591"/>
<line x1="432.5" y1="76" x2="432.5" y2="591"/>
<line x1="505.5" y1="76" x2="505.5" y2="591"/>
<line x1="578.5" y1="76" x2="578.5" y2="591"/>
<line x1="35" y1="538.5" x2="633" y2="538.5"/>
<line x1="35" y1="459.5" x2="633" y2="459.5"/>
<line x1="35" y1="385.5" x2="633" y2="385.5"/>
<line x1="35" y1="311.5" x2="633" y2="311.5"/>
<line x1="35" y1="232.5" x2="633" y2="232.5"/>
<line x1="35" y1="140.5" x2="633" y2="140.5"/>
</g>
<g fill="#c0c0c0" font-family="Liberation Sans, Arial, sans-serif" font-size="11px">
<text transform="translate(71.8,91.7) scale(0.89,1.06)">45 W</text>
<text transform="translate(144.5,91.7) scale(0.89,1.06)">30 W</text>
<text transform="translate(217.1,91.7) scale(0.89,1.06)">15 W</text>
<text transform="translate(289.8,91.7) scale(0.89,1.06)">0 E</text>
<text transform="translate(362.5,91.7) scale(0.89,1.06)">15 E</text>
<text transform="translate(435.1,91.7) scale(0.89,1.06)">30 E</text>
<text transform="translate(507.8,91.7) scale(0.89,1.06)">45 E</text>
<text transform="translate(580.5,91.7) scale(0.89,1.06)">60 E</text>
<text transform="translate(40.3,553.7) scale(0.89,1.06)">30 S</text>
<text transform="translate(40.3,474.7) scale(0.89,1.06)">15 S</text>
<text transform="translate(40.3,327.5) scale(0.89,1.06)">15 N</text>
<text transform="translate(40.3,248.5) scale(0.89,1.06)">30 N</text>
<text transform="translate(40.3,156.3) scale(0.89,1.06)">45 N</text>
</g>
<g shape-rendering="auto">
<polyline points="35.0,135.6 50.0,131.5 69.0,127.3 90.0,123.5 110.0,120.7 130.0,119.0 151.0,118.2 170.0,118.6 190.0,120.3 214.3,124.3 242.1,129.5 272.5,137.3" fill="none" stroke="#0000ff" stroke-width="1" stroke-linejoin="round" shape-rendering="crispEdges"/>
<polyline points="279.0,140.0 254.0,115.0 280.0,97.0" fill="none" stroke="#0000ff" stroke-width="1" stroke-linejoin="round" shape-rendering="crispEdges"/>
<polyline points="35.0,357.1 49.2,380.0 56.0,387.0 63.1,390.3 82.4,395.8 98.2,400.6 115.3,403.7 121.9,406.0 121.9,412.9 119.5,441.3 116.3,455.3 103.2,488.1 90.6,515.9 80.0,538.6 69.1,561.3 53.9,590.0 51.0,596.0" fill="none" stroke="#0000ff" stroke-width="1" stroke-linejoin="round" shape-rendering="crispEdges"/>
<polyline points="376.0,560.0 384.0,563.0 393.0,570.0 410.0,578.5 437.0,591.5" fill="none" stroke="#0000ff" stroke-width="1" stroke-linejoin="round" shape-rendering="crispEdges"/>
<defs><linearGradient id="rg" gradientUnits="userSpaceOnUse" x1="0" y1="297" x2="0" y2="560"><stop offset="0" stop-color="#e8002c"/><stop offset="0.16" stop-color="#e00030"/><stop offset="0.205" stop-color="#8000a0"/><stop offset="0.235" stop-color="#2800e0"/><stop offset="0.3" stop-color="#4000c8"/><stop offset="0.5" stop-color="#5800b0"/><stop offset="1" stop-color="#7800a0"/></linearGradient></defs>
<polyline points="280.7,97.7 254.7,115.7" fill="none" stroke="#b01850" stroke-width="1.2" stroke-linejoin="round" shape-rendering="crispEdges"/>
<polyline points="254.0,115.0 221.0,147.0" fill="none" stroke="#e8102c" stroke-width="2.5" stroke-linejoin="round" shape-rendering="crispEdges"/>
<polyline points="221.0,147.0 217.8,153.9 206.8,179.8 201.3,190.0 196.8,203.9 186.9,223.8 178.3,243.7 169.8,265.0 164.5,280.0 161.3,284.7 160.2,290.3 161.0,297.0" fill="none" stroke="#f0001c" stroke-width="2.5" stroke-linejoin="round" shape-rendering="crispEdges"/>
<polyline points="161.0,297.0 163.4,304.0 171.6,313.2 181.1,325.8 192.1,340.0 199.2,350.3 206.4,360.6 214.2,370.8 222.1,380.0 235.4,398.6 249.3,417.5 265.8,439.0 270.0,443.1 288.5,466.7 311.1,493.4 337.8,522.2 356.3,542.7 366.5,552.5 374.0,559.0" fill="none" stroke="url(#rg)" stroke-width="2.5" stroke-linejoin="round" shape-rendering="crispEdges"/>
</g>
<g>
<rect x="272.5" y="133.5" width="13" height="13" fill="#ffffff" stroke="#000" stroke-width="1"/><text x="279" y="144" text-anchor="middle" font-family="Liberation Sans, Arial, sans-serif" font-size="10.5px" fill="#000">1</text>
<rect x="247.5" y="108.5" width="13" height="13" fill="#ffffff" stroke="#000" stroke-width="1"/><text x="254" y="119" text-anchor="middle" font-family="Liberation Sans, Arial, sans-serif" font-size="10.5px" fill="#000">2</text>
<rect x="272.5" y="93.5" width="13" height="13" fill="#ffffff" stroke="#000" stroke-width="1"/>
<rect x="273.5" y="90.5" width="13" height="13" fill="#00fa00" stroke="#000" stroke-width="1"/><text x="280" y="101" text-anchor="middle" font-family="Liberation Sans, Arial, sans-serif" font-size="10.5px" fill="#000">1</text>
<rect x="214.5" y="140.5" width="13" height="13" fill="#00fa00" stroke="#000" stroke-width="1"/><text x="221" y="151" text-anchor="middle" font-family="Liberation Sans, Arial, sans-serif" font-size="10.5px" fill="#000">2</text>
<rect x="150.5" y="290.5" width="13" height="13" fill="#00fa00" stroke="#000" stroke-width="1"/><text x="157" y="301" text-anchor="middle" font-family="Liberation Sans, Arial, sans-serif" font-size="10.5px" fill="#000">3</text>
<rect x="366.5" y="553.5" width="13" height="13" fill="#00fa00" stroke="#000" stroke-width="1"/>
<rect x="368.5" y="553.5" width="13" height="13" fill="#00fa00" stroke="#000" stroke-width="1"/><text x="375" y="564" text-anchor="middle" font-family="Liberation Sans, Arial, sans-serif" font-size="10.5px" fill="#000">5</text>
<rect x="115.5" y="399.5" width="13" height="13" fill="#ffffff" stroke="#000" stroke-width="1"/><text x="122" y="410" text-anchor="middle" font-family="Liberation Sans, Arial, sans-serif" font-size="10.5px" fill="#000">7</text>
<rect x="111.5" y="441.5" width="13" height="13" fill="#ffffff" stroke="#000" stroke-width="1"/><text x="118" y="452" text-anchor="middle" font-family="Liberation Sans, Arial, sans-serif" font-size="10.5px" fill="#000">6</text>
<rect x="49.5" y="380.5" width="13" height="13" fill="#ffffff" stroke="#000" stroke-width="1"/><text x="56" y="391" text-anchor="middle" font-family="Liberation Sans, Arial, sans-serif" font-size="10.5px" fill="#000">8</text>
<rect x="40.5" y="386.5" width="13" height="13" fill="#ffffff" stroke="#000" stroke-width="1"/><text x="47" y="397" text-anchor="middle" font-family="Liberation Sans, Arial, sans-serif" font-size="10.5px" fill="#000">9</text>
</g>
<g stroke="#e00000" stroke-width="1" fill="none"><polyline points="514.5,557 514.5,561.5 610.5,561.5 610.5,557"/></g>
<text x="511" y="551" font-family="Liberation Sans, Arial, sans-serif" font-size="11px" fill="#e00000">0</text>
</svg>
<div id="left" class="abs">
<svg class="abs" style="left:0;top:0" width="34" height="113" viewBox="0 76 34 113" shape-rendering="crispEdges"><rect x="0" y="76" width="34" height="113" fill="#00ffff"/>
<g stroke="#b0b0b0" stroke-width="1">
<line x1="3.5" y1="76" x2="3.5" y2="189"/>
<line x1="8.5" y1="76" x2="8.5" y2="189"/>
<line x1="12.5" y1="76" x2="12.5" y2="189"/>
<line x1="17.5" y1="76" x2="17.5" y2="189"/>
<line x1="21.5" y1="76" x2="21.5" y2="189"/>
<line x1="26.5" y1="76" x2="26.5" y2="189"/>
<line x1="31.5" y1="76" x2="31.5" y2="189"/>
<line x1="0" y1="98.5" x2="34" y2="98.5"/>
<line x1="0" y1="101.5" x2="34" y2="101.5"/>
<line x1="0" y1="110.5" x2="34" y2="110.5"/>
<line x1="0" y1="117.5" x2="34" y2="117.5"/>
<line x1="0" y1="122.5" x2="34" y2="122.5"/>
<line x1="0" y1="128.5" x2="34" y2="128.5"/>
<line x1="0" y1="133.5" x2="34" y2="133.5"/>
<line x1="0" y1="137.5" x2="34" y2="137.5"/>
<line x1="0" y1="143.5" x2="34" y2="143.5"/>
<line x1="0" y1="148.5" x2="34" y2="148.5"/>
<line x1="0" y1="155.5" x2="34" y2="155.5"/>
<line x1="0" y1="164.5" x2="34" y2="164.5"/>
<line x1="0" y1="167.5" x2="34" y2="167.5"/>
</g>
<g fill="#d0ffbc" stroke="#808000" stroke-width="1" stroke-linejoin="round">
<polygon points="-1,100.1 3,98.1 5.6,96.1 8.1,94.5 10.1,95.6 10.6,98.1 13.1,99.6 16.7,100.1 17.7,98.1 18.7,98.5 20.2,100.1 23.7,101.1 26.3,103.1 30.3,103.6 33.8,105.2 33.8,107.7 30.8,106.7 29.3,108.7 26.3,109.7 24.7,112.7 23.7,110.2 21.7,110.2 18.7,111.7 17.7,114.2 19.7,116.8 18.2,118.3 15.2,117.8 13.6,120.3 12.6,122.3 13.1,124.8 10.6,126.9 9.1,125.9 7.6,127.4 6.1,125.4 4,124.8 2,126.4 -1,127"/>
<polygon points="4,90 6.5,90.5 6.5,92.5 5,92.8 4,91.5"/>
<polyline fill="none" points="0,115.3 6.1,114.7 10.1,115.3 13.1,114.2 15.2,116.3"/><polyline fill="none" points="3,116.8 6.1,119.3 9.6,119.3 12.1,117.3"/>
<polygon points="18.2,119.3 19.7,120.3 18.7,121.8 17.5,121"/><polygon points="15.2,122.5 16.2,123 16,124.5 15,124"/>
<polygon points="4,128 6,127.5 7,129.5 6,131.5 4.5,130"/><polygon points="6,131 8,131.5 9,133.5 7,134"/><polygon points="9,132 12,131.5 13,133.5 10.5,135.5 9,134"/><polygon points="13,133 16,133.5 19.5,135 17,136 14,135"/><polygon points="12,126.5 13.5,127 13.5,129.5 12.5,129"/><polygon points="19,134 21.5,135 21,136.5"/>
<polygon points="10.1,140.5 13.1,138.5 16.7,137.5 20.2,138 21.7,140.5 22.2,144 20.2,146.6 17.7,145.1 14.1,144.5 11.6,143"/>
<polygon points="28.3,144.5 30.3,146.6 28.8,148.6 27.3,148.1"/>
<polygon points="-1,161 10,160 20,161 24,163 28,165 27,169 25,172 24,177 26,182 30,185 34,187 34,190 -1,190"/>
</g>
<rect x="0" y="115" width="1" height="30" fill="#ff0000"/>
</svg>
<div class="hl" style="top:115px"></div>
<div class="t" style="left:15px;top:131px;font-size:11.5px">F4</div>
<div class="t" style="left:15px;top:168.5px;font-size:11.5px">F4</div>
<div class="t" style="left:15px;top:219px;font-size:11.5px">F3</div>
<svg class="abs" style="left:0;top:155px" width="34" height="35"><g stroke="#f00" stroke-width="1" fill="none"><line x1="0" y1="25.5" x2="17" y2="25.5"/><polyline points="14,21.5 10,25.5 14,29.5"/><polyline points="18,21.5 14,25.5 18,29.5"/><line x1="0" y1="9" x2="3.5" y2="7.5"/></g></svg>
<div class="hl" style="top:232px"></div>
<div class="t" style="right:6px;top:334px;font-size:12px">0.1K</div>
<div class="hl" style="top:348px"></div>
<div class="t" style="right:11px;top:354px">Speed:</div>
<div class="t b" style="right:8px;top:370px">Knots</div>
<div class="t b" style="right:8px;top:402px">0 %</div>
<div class="t b" style="right:8px;top:434px">7 Feet</div>
<div class="t" style="right:17px;top:451px">Pressure:</div>
<div class="t b" style="right:8px;top:467px">70.2°F</div>
<div class="t" style="right:23px;top:483px">Temperature:</div>
<div class="t b" style="right:8px;top:499px">59.8°F</div>
</div>
<div class="abs" style="left:34px;top:76px;width:1px;height:515px;background:#fff"></div>
<div id="ir" class="abs">
<div id="irh"><span style="position:absolute;left:8px;top:8px;line-height:16px">Instant Report</span><div style="position:absolute;left:103px;top:8px;width:30px;height:19px;background:#c75050"></div><span style="position:absolute;left:110px;top:9px;font-size:12px;font-weight:bold;line-height:16px">x</span></div>
<div class="row" style="top:31px;height:35px"><span class="l">Great Circle Distance:</span><span class="v">6404.3 NM</span></div>
<div class="row" style="top:65px;height:35px"><span class="l">Distance Traveled:</span><span class="v">6943.4 NM</span></div>
<div class="row" style="top:99px;height:35px"><span class="l">Rhumbline Distance:</span><span class="v">6409.8 NM</span></div>
<div class="row" style="top:133px;height:35px"><span class="l">Elapsed Time:</span><span class="v">38.6 Days</span></div>
<div class="row" style="top:167px;height:35px"><span class="l">Fuel Consumption:</span><span class="v">0.0 Units</span></div>
<div class="row" style="top:201px;height:35px"><span class="l">Average Boat Speed:</span><span class="v">7.5 Kts</span></div>
<div class="row" style="top:235px;height:53px"><span class="l">Boat Speed Made Good:</span><span class="v">6.9 Kts</span><span style="position:absolute;left:10px;top:34px;color:#0066cc;line-height:13px">3.68</span><div style="position:absolute;left:36px;top:34px;width:49px;height:11px;box-sizing:border-box;border:1px solid #909090;background:linear-gradient(90deg,#0000ff,#ff0000)"></div><span style="position:absolute;left:90px;top:34px;color:#0066cc;line-height:13px">10.68</span></div>
<div class="row" style="top:287px;height:35px"><span class="l">Average Wind Direction:</span><span class="v">123 Deg</span></div>
<div class="row" style="top:321px;height:35px"><span class="l">Average Wind Speed:</span><span class="v">12.6 Kts</span></div>
<div class="row" style="top:355px;height:35px"><span class="l">Average Current Set:</span><span class="v">243 Deg</span></div>
<div class="row" style="top:389px;height:35px"><span class="l">Average Current Drift:</span><span class="v">0.6 Kts</span></div>
<div class="row" style="top:423px;height:35px"><span class="l">Average Wave Height:</span><span class="v">5.1 Ft</span></div>
</div>
<div id="bot" class="abs">
<div class="abs" style="left:35px;top:0;width:598px;height:25px;background:#f0f0f0;border-bottom:1px solid #a0a0a0;border-left:1px solid #a0a0a0;border-top:1px solid #fff;box-sizing:content-box"></div>
<svg class="abs" style="left:40px;top:4px" width="3" height="20"><g fill="#b4b4b4"><rect x="0" y="0" width="2" height="2"/><rect x="0" y="4" width="2" height="2"/><rect x="0" y="8" width="2" height="2"/><rect x="0" y="12" width="2" height="2"/><rect x="0" y="16" width="2" height="2"/></g></svg>
<div class="sep" style="left:294px;top:2px;height:22px;background:#d0d0d0"></div>
<svg class="abs" style="left:299px;top:4px" width="3" height="20"><g fill="#b4b4b4"><rect x="0" y="0" width="2" height="2"/><rect x="0" y="4" width="2" height="2"/><rect x="0" y="8" width="2" height="2"/><rect x="0" y="12" width="2" height="2"/><rect x="0" y="16" width="2" height="2"/></g></svg>
<svg class="abs" style="left:50px;top:6px" width="16" height="16" viewBox="0 0 16 16"><g stroke="#000" stroke-width="0.8" fill="#00e8e8"><circle cx="7.5" cy="7.5" r="6.5"/><ellipse cx="7.5" cy="7.5" rx="3" ry="6.5" fill="none"/><line x1="7.5" y1="1" x2="7.5" y2="14"/><line x1="1" y1="7.5" x2="14" y2="7.5"/><line x1="2" y1="4.5" x2="13" y2="4.5"/><line x1="2" y1="10.5" x2="13" y2="10.5"/></g></svg>
<div class="sel" style="left:71px;top:3px;width:22px;height:21px"></div>
<svg class="abs" style="left:74px;top:6px" width="16" height="16" viewBox="0 0 16 16"><rect x="1" y="1" width="14" height="14" fill="#00e0e0"/><g stroke="#000" stroke-width="1" fill="none"><rect x="1.5" y="1.5" width="13" height="13" stroke-width="1"/><line x1="5.5" y1="1" x2="5.5" y2="15"/><line x1="10.5" y1="1" x2="10.5" y2="15"/><line x1="1" y1="5.5" x2="15" y2="5.5"/><line x1="1" y1="10.5" x2="15" y2="10.5"/></g></svg>
<svg class="abs" style="left:96px;top:6px" width="16" height="16" viewBox="0 0 16 16"><rect x="1" y="1" width="14" height="14" fill="#00e0e0"/><g stroke="#000" stroke-width="1" fill="none"><rect x="1.5" y="1.5" width="13" height="13" stroke-width="1"/><line x1="5.5" y1="1" x2="5.5" y2="15"/><line x1="10.5" y1="1" x2="10.5" y2="15"/><line x1="1" y1="5.5" x2="15" y2="5.5"/><line x1="1" y1="10.5" x2="15" y2="10.5"/></g></svg>
<div class="sep" style="left:118px;top:4px;height:18px"></div>
<svg class="abs" style="left:127px;top:6px" width="17" height="17" viewBox="0 0 17 17"><circle cx="6.5" cy="6.5" r="5" fill="#fff" stroke="#000" stroke-width="1.3"/><line x1="10.5" y1="10.5" x2="15" y2="15" stroke="#000" stroke-width="2.200"/><g stroke="#e00000" stroke-width="1.3"><line x1="4" y1="6.5" x2="9" y2="6.5"/><line x1="6.5" y1="4" x2="6.5" y2="9"/></g></svg>
<svg class="abs" style="left:150px;top:6px" width="17" height="17" viewBox="0 0 17 17"><circle cx="6.5" cy="6.5" r="5" fill="#fff" stroke="#000" stroke-width="1.3"/><line x1="10.5" y1="10.5" x2="15" y2="15" stroke="#000" stroke-width="2.200"/><g stroke="#e00000" stroke-width="1.3"><line x1="4" y1="6.5" x2="9" y2="6.5"/></g></svg>
<svg class="abs" style="left:174px;top:6px" width="17" height="17" viewBox="0 0 17 17"><circle cx="6.5" cy="6.5" r="5" fill="#fff" stroke="#000" stroke-width="1.3"/><line x1="10.5" y1="10.5" x2="15" y2="15" stroke="#000" stroke-width="2.200"/><g stroke="#e00000" stroke-width="1.200" fill="none"><line x1="2.5" y1="6.5" x2="10.5" y2="6.5"/><line x1="6.5" y1="2.5" x2="6.5" y2="10.5"/><circle cx="6.5" cy="6.5" r="2.5"/></g></svg>
<div class="sep" style="left:195px;top:4px;height:18px"></div>
<div class="abs" style="left:201px;top:3px;width:87px;height:21px;box-sizing:border-box;border:1px solid #adadad;background:#e1e1e1"><span style="position:absolute;left:4px;top:3px;font-size:11.5px;line-height:14px">May</span><svg class="abs" style="left:73px;top:7px" width="10" height="6"><polyline points="0.5,0.5 4.5,4.5 8.5,0.5" fill="none" stroke="#444" stroke-width="1.200"/></svg></div>
<div class="abs" style="left:309px;top:3px;width:72px;height:21px;box-sizing:border-box;border:2px solid #808080;border-right:1px solid #fff;border-bottom:1px solid #fff;background:#fbfbfb"></div>
<span class="abs" style="left:315.5px;top:7px;font-size:10.7px;line-height:13px;white-space:nowrap;color:#000">WBRDLEG1</span>
<span class="abs" style="left:397px;top:7px;font-size:10.7px;line-height:13px;white-space:nowrap;color:#000">WBRDLEG2</span>
<span class="abs" style="left:480px;top:7px;font-size:10.7px;line-height:13px;white-space:nowrap;color:#000">WBRDLEG3</span>
<span class="abs" style="left:563px;top:7px;font-size:10.7px;line-height:13px;white-space:nowrap;color:#000">WBRDLEG4</span>
<div class="sep" style="left:384.5px;top:3px;height:21px"></div>
<div class="sep" style="left:468.5px;top:3px;height:21px"></div>
<div class="sep" style="left:551.5px;top:3px;height:21px"></div>
<div class="abs" style="left:624px;top:8px;width:10px;height:17px;background:#f0f0f0;border-left:1px solid #c0c0c0"><svg width="9" height="17"><path d="M7 5v7l-4-3.5z" fill="#000"/></svg></div>
</div>
<div id="status" class="abs"><span class="abs" style="left:-5px;top:3px;line-height:15px">32° 59.15' W</span><span class="abs" style="left:97px;top:3px;line-height:15px">Magnetic Variation: -11.26° for 12/27/2016</span>
<div class="sep" style="left:91px;top:2px;height:14px;background:#c8c8c8"></div><div class="sep" style="left:391px;top:2px;height:14px;background:#c8c8c8"></div></div>
</body></html>
